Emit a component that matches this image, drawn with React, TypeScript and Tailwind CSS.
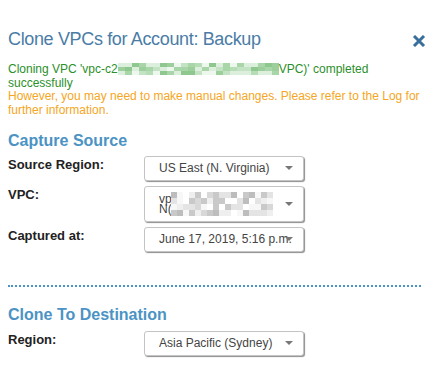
import React from "react";

function rand(seed: number) {
  let s = seed;
  return () => {
    s = (s * 9301 + 49297) % 233280;
    return s / 233280;
  };
}

function Mosaic({
  cols,
  rows,
  cw,
  ch,
  palette,
  seed,
}: {
  cols: number;
  rows: number;
  cw: number;
  ch: number;
  palette: string[];
  seed: number;
}) {
  const r = rand(seed);
  const cells: string[] = [];
  for (let i = 0; i < cols * rows; i++) {
    cells.push(palette[Math.floor(r() * palette.length)]);
  }
  return (
    <span
      className="inline-grid align-top"
      style={{
        gridTemplateColumns: `repeat(${cols}, ${cw}px)`,
        gridTemplateRows: `repeat(${rows}, ${ch}px)`,
      }}
    >
      {cells.map((c, i) => (
        <span key={i} style={{ backgroundColor: c }} />
      ))}
    </span>
  );
}

const greenPal = ["#8fc88f", "#a9d6a9", "#c4e3c4", "#dcefdc", "#eef7ee", "#b6ddb6", "#9ccf9c"];
const grayPal = ["#c9c9c9", "#d8d8d8", "#e4e4e4", "#efefef", "#f7f7f7", "#bdbdbd", "#ffffff"];

function Caret() {
  return (
    <span className="absolute right-[10px] top-1/2 -translate-y-1/2 w-0 h-0 border-l-[4px] border-r-[4px] border-t-[4px] border-l-transparent border-r-transparent border-t-[#777777]" />
  );
}

function Select({ children, tall }: { children: React.ReactNode; tall?: boolean }) {
  return (
    <div
      className={`relative w-[160px] ${tall ? "h-[36px]" : "h-[25px]"} bg-white border border-[#c4c4c4] rounded-[3px] shadow-[1px_1px_1px_rgba(0,0,0,0.45)] flex items-center pl-[14px] text-[12px] text-[#444444] whitespace-nowrap overflow-hidden`}
    >
      {children}
      <Caret />
    </div>
  );
}

function Row({ label, children }: { label: string; children: React.ReactNode }) {
  return (
    <div className="flex items-start">
      <div className="w-[136px] text-[13px] leading-[15px] font-bold text-[#222222] pt-px">{label}</div>
      {children}
    </div>
  );
}

export default function App() {
  return (
    <div className="w-[443px] h-[369px] bg-white pl-2 pr-[15px] pt-[29px] font-['Liberation_Sans',Arial,sans-serif] overflow-hidden">
      <div className="flex justify-between items-center h-[21px]">
        <div className="text-[18px] leading-[21px] text-[#4a7ca6] tracking-[-0.35px]">
          Clone VPCs for Account: Backup
        </div>
        <svg width="14" height="12" viewBox="0 0 14 12" className="mr-[2px] mt-[2px]">
          <path d="M2 1 L12 11 M12 1 L2 11" stroke="#3a6f9c" strokeWidth="3" strokeLinecap="butt" />
        </svg>
      </div>

      <div className="mt-[13px] text-[12px] leading-[13.5px]">
        <div className="text-[#2b8f2b]">
          Cloning VPC 'vpc-c2
          <Mosaic cols={23} rows={3} cw={7} ch={4} palette={greenPal} seed={7} />
          VPC)' completed successfully
        </div>
        <div className="text-[#f5a623]">
          However, you may need to make manual changes. Please refer to the Log for further information.
        </div>
      </div>

      <div className="mt-[14.5px] text-[16px] leading-[18px] font-bold text-[#4b93c4]">Capture Source</div>

      <div className="mt-[6px] flex flex-col gap-[5px]">
        <Row label="Source Region:">
          <Select>US East (N. Virginia)</Select>
        </Row>
        <Row label="VPC:">
          <Select tall>
            <div className="flex items-center">
              <div className="leading-[10px] text-[12px]">
                <div>vp</div>
                <div>N(</div>
              </div>
              <span className="-ml-[1px]">
                <Mosaic cols={17} rows={4} cw={6} ch={6} palette={grayPal} seed={13} />
              </span>
            </div>
          </Select>
        </Row>
        <Row label="Captured at:">
          <Select>June 17, 2019, 5:16 p.m.</Select>
        </Row>
      </div>

      <div className="mt-[33.5px] w-[413px] border-t-2 border-dotted border-[#4b93c4]" />

      <div className="mt-[19px] text-[16px] leading-[18px] font-bold text-[#4b93c4]">Clone To Destination</div>

      <div className="mt-[6.5px]">
        <Row label="Region:">
          <Select>Asia Pacific (Sydney)</Select>
        </Row>
      </div>
    </div>
  );
}
